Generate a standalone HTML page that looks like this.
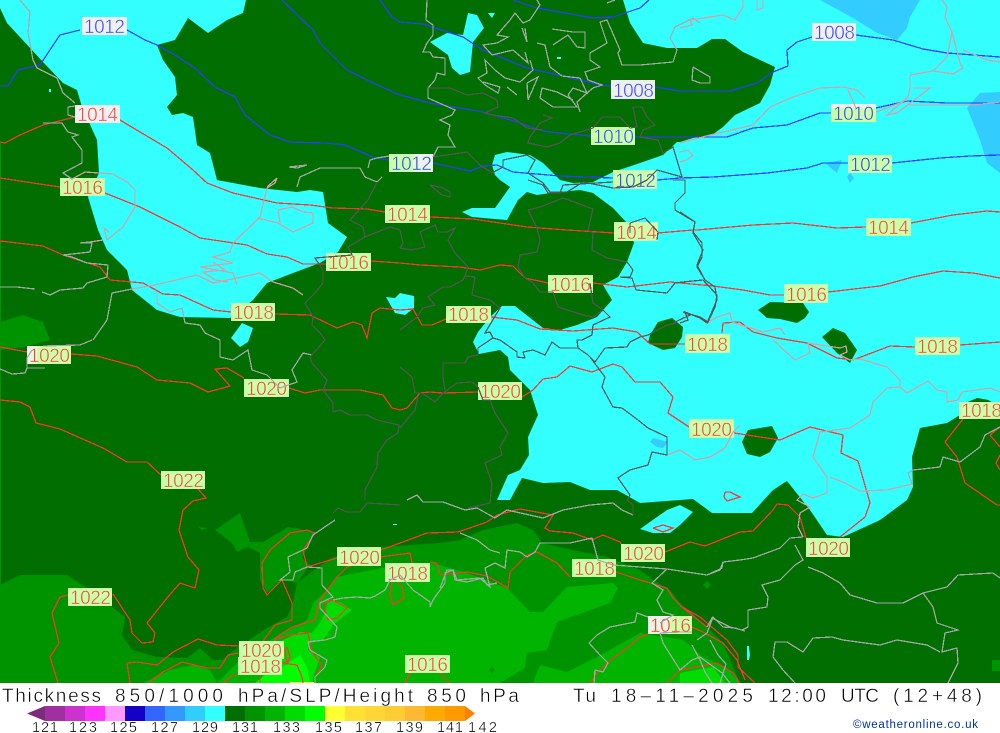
<!DOCTYPE html>
<html><head><meta charset="utf-8"><title>Thickness 850/1000 hPa/SLP/Height 850 hPa</title>
<style>
html,body{margin:0;padding:0;background:#fff;width:1000px;height:733px;overflow:hidden}
svg{display:block;position:absolute;left:0;top:0}
.r,.b,.g,.d,.p{fill:none;stroke-width:1.25;shape-rendering:crispEdges}
.r{stroke:#ff3333}.b{stroke:#2a3cff}.g{stroke:#a8a8a8}.d{stroke:#555}.p{stroke:#d2a0a8}
.l{font:19px "Liberation Sans",sans-serif;stroke-width:.55}
.t{font:19px "Liberation Sans",sans-serif;fill:#000;stroke:#fff;stroke-width:.45}
.n{font:14.5px "Liberation Sans",sans-serif;fill:#000;stroke:#fff;stroke-width:.3}
.gn{fill:#ccffaa;stroke:#ccffaa}.wh{fill:#f0f0f0;stroke:#f0f0f0}
</style></head><body>
<svg width="1000" height="733" viewBox="0 0 1000 733" xmlns="http://www.w3.org/2000/svg">
<rect width="1000" height="733" fill="#fff"/>
<rect width="1000" height="683" fill="#006e00"/>
<!-- band 2 -->
<g fill="#009300">
<path d="M0,585L20,575L67,575L90,590L125,617L122,635L132,650L157,657L187,658L200,648L213,660L222,660L237,648L267,628L287,617L293,603L297,583L310,573L333,557L380,547L440,543L460,540L483,530L517,523L533,530L542,543L573,550L607,557L640,570L653,580L670,590L680,603L703,623L723,643L733,667L740,683L0,683Z"/>
<path d="M215,530L240,513L250,542L263,542L288,527L315,532L302,558L310,565L297,583L283,580L267,593L260,580L260,553L248,547L237,552L232,543Z"/>
<path d="M0,322L23,315L43,322L50,340L25,347L0,350Z"/>
<rect x="0" y="143" width="1" height="450"/>
<path d="M198,527L208,528L202,530Z"/><path d="M707,581L711,585L707,589L703,585Z"/><rect x="992" y="660" width="8" height="11"/>
</g>
<!-- band 3 -->
<g fill="#00b400">
<path d="M217,683L240,660L262,645L283,633L307,620L313,603L327,590L337,577L387,567L433,563L467,573L507,588L530,612L543,612L567,587L613,583L618,588L610,603L557,622L547,650L527,653L525,668L500,683Z"/>
<path d="M533,683L540,665L567,672L597,657L640,633L683,640L703,657L727,668L740,683Z"/>
<path d="M143,683L170,670L193,665L210,670L217,683Z"/>
</g>
<path d="M492,667L495,670L492,673L489,670Z" fill="#009300"/>
<g fill="#00dc00">
<path d="M260,683L270,655L283,640L300,632L312,633L320,623L325,613L328,600L340,602L352,610L333,625L323,640L310,643L308,650L320,658L313,677L313,683Z"/>
<path d="M680,673L713,667L725,683L680,683Z"/>
</g>
<path d="M255,683L265,675L283,667L300,655L307,667L310,683Z" fill="#00ff00"/>
<rect x="290" y="682" width="24" height="1" fill="#ffff33"/>
<!-- cyan -->
<g fill="#33ffff">
<path d="M0,0L246,0L243,13L227,20L208,33L188,18L175,40L157,45L163,60L175,77L177,95L167,107L172,115L183,113L193,117L197,145L210,153L217,180L260,188L297,192L310,190L323,192L328,223L347,237L338,252L320,263L293,273L267,283L253,300L230,318L180,317L157,310L132,290L127,270L107,250L98,230L88,197L99,173L97,140L82,107L77,90L63,83L43,62L7,23L0,8Z"/>
<path d="M623,0L1000,0L1000,407L988,400L977,398L963,413L947,423L920,428L912,457L913,487L907,500L880,520L843,537L827,535L810,510L787,481L773,490L752,513L712,513L693,499L640,503L617,490L590,490L570,482L543,483L522,478L510,500L497,500L508,475L520,470L529,455L528,437L538,415L530,390L510,370L508,357L500,350L479,354L473,342L478,332L490,317L502,306L515,306L543,328L560,330L577,325L597,317L612,300L603,285L618,277L627,262L634,243L627,223L613,208L593,193L580,190L550,193L537,195L527,192L518,200L507,220L472,217L462,212L472,208L495,208L510,187L500,180L495,175L492,165L495,155L507,152L530,155L543,163L560,180L573,183L593,182L613,172L640,163L663,155L677,142L680,142L693,138L712,135L723,127L735,115L760,103L770,85L775,67L743,52L725,39L712,39L697,48L667,48L643,43L630,23Z"/>
<path d="M468,13L477,15L484,28L473,42L470,72L460,75L452,68L448,55L430,42L447,33L463,35Z"/>
<path d="M488,13L495,13L492,18Z"/><rect x="557" y="57" width="4" height="2"/><rect x="49" y="89" width="2" height="3"/>
<path d="M640,529L667,510L680,505L693,512L680,525L670,533L653,533Z"/>
<path d="M386,297L395,298L400,293L414,296L414,308L405,315L395,313Z"/>
<path d="M231,338L242,323L253,328L248,342L240,347Z"/>
</g>
<rect x="393" y="524" width="4" height="1" fill="#33ffff"/>
<path d="M747,646L749,646L750,655L749,660L747,660Z" fill="#33ffff"/>
<!-- blue -->
<g fill="#33ccff">
<path d="M820,0L920,0L910,17L907,28L897,40L877,33L853,18Z"/>
<path d="M1000,92L980,93L967,108L980,140L987,163L1000,173Z"/>
<path d="M825,163L842,160L837,173Z"/><path d="M847,177L850,173L854,178L850,183Z"/>
<path d="M650,442L653,438L668,442L663,448L657,447Z"/>
</g>
<!-- dark blobs -->
<g fill="#006e00">
<path d="M650,335L658,322L672,318L683,327L682,337L675,348L663,350L648,343Z"/>
<path d="M758,310L770,302L803,303L809,312L805,318L797,323L780,319L767,318Z"/>
<path d="M822,337L833,328L845,333L857,350L850,363L837,353Z"/>
<path d="M742,442L748,430L772,426L778,438L770,452L760,457L747,454Z"/>
<path d="M963,404L977,398L988,400L1000,407L1000,420L963,420Z"/>
</g>
<!-- blue contours -->
<g class="b">
<polyline points="0,86 8,86 18,70 40,65 50,50 60,35 80,30"/>
<polyline points="127,30 145,40 157,45 175,55 195,68 215,87 235,97 245,115 270,135 290,142 325,143 345,145 375,158 389,160"/>
<polyline points="433,163 447,166 470,171 483,166 497,165 513,172 560,176 613,178"/>
<polyline points="657,180 680,178 713,177 767,173 807,168 823,163 848,163"/>
<polyline points="892,163 940,158 970,156 1000,155"/>
<polyline points="282,0 313,30 320,43 347,70 363,78 380,86 397,94 430,103 483,112 517,122 543,131 567,134 591,136"/>
<polyline points="635,137 680,137 727,137 753,128 787,125 820,113 831,113"/>
<polyline points="876,108 907,101 947,103 1000,103"/>
<polyline points="380,0 392,17 400,22 423,24 463,37 483,50 527,68 567,77 600,85 611,86"/>
<polyline points="655,87 680,91 730,91 757,83 773,72 788,66 787,50 797,42 812,37"/>
<polyline points="856,35 893,40 923,49 947,53 1000,57"/>
<polyline points="513,0 537,8 593,18 613,17 640,8 649,0"/>
</g>
<!-- red contours -->
<g class="r">
<polyline points="0,142 5,143 20,135 43,125 75,117"/>
<polyline points="120,120 140,132 167,148 193,170 207,183 233,193 277,203 310,205 333,208 367,209 385,212"/>
<polyline points="430,217 473,219 527,227 567,230 614,233"/>
<polyline points="658,233 693,230 697,230 753,225 793,223 837,228 866,227"/>
<polyline points="911,223 953,215 987,211 1000,212"/>
<polyline points="0,178 33,183 60,187"/>
<polyline points="105,193 140,207 180,227 200,238 247,245 267,254 287,257 303,264 326,264"/>
<polyline points="371,261 400,263 420,265 460,267 480,270 500,265 513,266 525,278 548,283"/>
<polyline points="593,283 627,287 670,282 713,286 743,290 770,295 784,295"/>
<polyline points="828,292 880,286 913,277 943,271 973,273 1000,278"/>
<polyline points="0,241 43,246 63,255 100,267 110,280 143,283 163,294 180,295 213,310 231,312"/>
<polyline points="275,314 310,315 337,328 353,322 362,325 367,338 372,313 380,308 400,310 413,309 422,325 432,325 446,319"/>
<polyline points="491,317 517,320 540,329 573,331 613,328 637,332 650,344 685,344"/>
<polyline points="722,333 723,323 740,322 753,332 777,338 807,343 837,358 853,360 890,346 915,347"/>
<polyline points="960,345 1000,342"/>
<polyline points="0,347 27,352"/>
<polyline points="71,354 97,356 137,367 157,380 190,383 208,392 230,386 215,369 227,368 244,378"/>
<polyline points="289,388 305,393 320,390 360,390 383,395 392,408 400,410 407,408 420,393 430,392 443,393 478,392"/>
<polyline points="522,397 533,390 543,379 557,377 570,366 592,372 613,364 622,367 635,382 660,382 673,397 668,413 689,427"/>
<polyline points="734,433 780,440 810,427 843,435 841,453 858,461 870,503 865,517 840,537"/>
<polyline points="665,552 690,542 705,546 740,532 753,531 773,510 777,504 788,505 800,517 806,538"/>
<polyline points="621,544 620,542 603,535 592,540 573,533 550,531 545,528 553,515 520,509 497,515 487,522 458,532 427,533 400,543 381,550"/>
<polyline points="337,558 307,567 303,550 315,533 307,530 290,533 270,550 262,563 263,588 267,595 282,580 292,603 292,620 275,625 263,641"/>
<polyline points="239,646 217,645 198,639 173,652 157,665 137,662 127,663 130,683"/>
<polyline points="238,653 228,655 220,668 207,668 182,662 163,672 148,683"/>
<polyline points="260,675 260,683"/><polyline points="223,683 233,675 238,675"/>
<polyline points="287,647 290,657 287,663 285,650 287,647"/>
<polyline points="282,663 297,665 302,677 303,683"/>
<polyline points="274,640 290,635 308,633 312,652 322,665 315,678 315,683"/>
<polyline points="275,638 292,627 315,620 320,600 337,577 347,567 380,557 410,553 412,563"/>
<polyline points="430,562 437,563 440,575 467,572 487,576 508,588 510,572 527,555 537,552 557,563 570,577"/>
<polyline points="616,572 640,580 667,588 673,598 683,608 707,627"/>
<polyline points="680,606 700,617 727,640 738,655 738,667 755,683"/>
<polyline points="648,634 640,637 627,648 607,663 597,673 590,683"/>
<polyline points="692,627 703,632 723,643 737,660 745,680"/>
<polyline points="667,683 680,670 717,663 733,673 740,683"/>
<polyline points="392,582 390,595 393,605 404,598 402,587 397,582"/>
<polyline points="325,603 333,600 347,608 337,618 328,620 325,610 325,603"/>
<polyline points="405,683 410,673"/><polyline points="440,673 450,683"/>
<polyline points="0,400 20,402 30,407 36,423 60,429 103,448 127,462 147,462 161,475"/>
<polyline points="198,489 206,498 193,501 183,510 179,530 188,557 199,570 195,588 180,583 167,598 147,623 155,633 153,642 142,643 132,633 130,620 113,594"/>
<polyline points="68,595 60,597 52,613 59,643 50,657 58,683"/>
<polyline points="725,492 730,492 740,497 727,501 724,497 725,492"/>
<polyline points="653,528 663,525 673,528 663,532 653,528"/>
<polyline points="963,419 945,442 957,457 965,483 997,505 1000,505"/>
<polyline points="1000,427 990,435 1000,447"/><polyline points="1000,455 996,463 1000,470"/>
</g>
<!-- labels -->
<g>
<rect x="82" y="17" width="45" height="18" fill="#f0f0f0"/><rect x="75" y="105" width="45" height="18" fill="#f0f0f0"/>
<rect x="611" y="80" width="44" height="19" fill="#f0f0f0"/><rect x="812" y="23" width="44" height="18" fill="#f0f0f0"/>
<g fill="#ccffaa">
<rect x="60" y="178" width="45" height="18"/><rect x="231" y="303" width="44" height="18"/><rect x="326" y="253" width="45" height="18"/>
<rect x="385" y="205" width="45" height="18"/><rect x="389" y="154" width="44" height="18"/><rect x="591" y="127" width="44" height="18"/>
<rect x="613" y="170" width="44" height="19"/><rect x="614" y="222" width="44" height="19"/><rect x="548" y="275" width="45" height="18"/>
<rect x="446" y="306" width="45" height="17"/><rect x="478" y="382" width="44" height="18"/><rect x="685" y="334" width="45" height="19"/>
<rect x="689" y="419" width="45" height="19"/><rect x="831" y="104" width="45" height="18"/><rect x="848" y="155" width="44" height="18"/>
<rect x="866" y="218" width="45" height="18"/><rect x="784" y="284" width="44" height="19"/><rect x="915" y="337" width="45" height="18"/>
<rect x="959" y="402" width="41" height="17"/><rect x="806" y="538" width="44" height="19"/><rect x="27" y="346" width="44" height="18"/>
<rect x="244" y="379" width="45" height="18"/><rect x="161" y="471" width="44" height="18"/><rect x="68" y="588" width="44" height="18"/>
<rect x="337" y="547" width="44" height="19"/><rect x="385" y="563" width="45" height="19"/><rect x="239" y="641" width="45" height="18"/>
<rect x="238" y="657" width="44" height="18"/><rect x="405" y="655" width="45" height="18"/><rect x="621" y="544" width="44" height="18"/>
<rect x="572" y="559" width="44" height="18"/><rect x="648" y="616" width="44" height="18"/>
</g>
<rect x="413" y="154" width="20" height="18" fill="#f0f0f0"/><rect x="648" y="616" width="22" height="18" fill="#f0f0f0"/><rect x="831" y="104" width="45" height="4" fill="#f0f0f0"/><rect x="27" y="346" width="10" height="18" fill="#f0f0f0"/>
</g>
<g class="l" text-anchor="start">
<text class="l wh" style="fill:#2a3cff" x="84" y="33" textLength="41">1012</text>
<text class="l wh" style="fill:#ff3333" x="77" y="121" textLength="41">1014</text>
<text class="l gn" style="fill:#ff3333" x="62" y="194" textLength="41">1016</text>
<text class="l gn" style="fill:#ff3333" x="233" y="319" textLength="41">1018</text>
<text class="l gn" style="fill:#ff3333" x="328" y="269" textLength="41">1016</text>
<text class="l gn" style="fill:#ff3333" x="387" y="221" textLength="41">1014</text>
<text class="l gn" style="fill:#2a3cff" x="391" y="170" textLength="41">1012</text>
<text class="l wh" style="fill:#2a3cff" x="613" y="97" textLength="41">1008</text>
<text class="l gn" style="fill:#2a3cff" x="593" y="143" textLength="41">1010</text>
<text class="l gn" style="fill:#2a3cff" x="615" y="187" textLength="41">1012</text>
<text class="l gn" style="fill:#ff3333" x="616" y="239" textLength="41">1014</text>
<text class="l gn" style="fill:#ff3333" x="550" y="291" textLength="41">1016</text>
<text class="l gn" style="fill:#ff3333" x="448" y="321" textLength="41">1018</text>
<text class="l gn" style="fill:#ff3333" x="480" y="398" textLength="41">1020</text>
<text class="l gn" style="fill:#ff3333" x="687" y="351" textLength="41">1018</text>
<text class="l gn" style="fill:#ff3333" x="691" y="436" textLength="41">1020</text>
<text class="l wh" style="fill:#2a3cff" x="814" y="39" textLength="41">1008</text>
<text class="l gn" style="fill:#2a3cff" x="833" y="120" textLength="41">1010</text>
<text class="l gn" style="fill:#2a3cff" x="850" y="171" textLength="41">1012</text>
<text class="l gn" style="fill:#ff3333" x="868" y="234" textLength="41">1014</text>
<text class="l gn" style="fill:#ff3333" x="786" y="301" textLength="41">1016</text>
<text class="l gn" style="fill:#ff3333" x="917" y="353" textLength="41">1018</text>
<text class="l gn" style="fill:#ff3333" x="961" y="417" textLength="41">1018</text>
<text class="l gn" style="fill:#ff3333" x="808" y="555" textLength="41">1020</text>
<text class="l gn" style="fill:#ff3333" x="29" y="362" textLength="41">1020</text>
<text class="l gn" style="fill:#ff3333" x="246" y="395" textLength="41">1020</text>
<text class="l gn" style="fill:#ff3333" x="163" y="487" textLength="41">1022</text>
<text class="l gn" style="fill:#ff3333" x="70" y="604" textLength="41">1022</text>
<text class="l gn" style="fill:#ff3333" x="339" y="564" textLength="41">1020</text>
<text class="l gn" style="fill:#ff3333" x="387" y="580" textLength="41">1018</text>
<text class="l gn" style="fill:#ff3333" x="241" y="657" textLength="41">1020</text>
<text class="l gn" style="fill:#ff3333" x="240" y="673" textLength="41">1018</text>
<text class="l gn" style="fill:#ff3333" x="407" y="671" textLength="41">1016</text>
<text class="l gn" style="fill:#ff3333" x="623" y="560" textLength="41">1020</text>
<text class="l gn" style="fill:#ff3333" x="574" y="575" textLength="41">1018</text>
<text class="l gn" style="fill:#ff3333" x="650" y="632" textLength="41">1016</text>
</g>
<!-- coasts -->
<g class="g">
<polyline points="20,0 30,12 28,33 33,60 37,68 57,78 63,93 75,103"/>
<polyline points="75,106 68,107 68,115 75,117"/>
<polyline points="43,123 62,123 68,132 78,135 72,137 82,150 82,163 63,173 72,179"/>
<polyline points="90,242 80,243 92,243 90,252 63,255 72,257 87,263 108,265 107,277 87,283 83,288 60,290 50,295 42,292"/>
<polyline points="0,287 17,287 35,289"/>
<polyline points="93,340 107,320 112,293 132,289"/>
<polyline points="170,312 182,308 185,323 200,325 205,333 220,340 220,357 233,360 248,350 252,370 267,375 280,388 297,382 292,370 303,353 312,355"/>
<polyline points="92,340 80,345 43,346"/><polyline points="0,369 12,374 25,373 27,368 45,368"/><polyline points="27,368 27,358 32,350"/>
<polyline points="289,167 307,165 297,168 289,167"/>
<polyline points="297,187 300,177 320,168 360,168 365,177 377,182 382,177"/>
<polyline points="368,168 370,160 377,158 389,156"/>
<polyline points="335,520 313,535 307,548 288,557 290,572 280,580 293,580 295,572 307,567 322,568 322,585 333,597 320,603 320,608 337,627 335,637 325,640 308,642 310,650 327,660 325,667 315,677 315,683"/>
<polyline points="333,600 343,598 357,597 370,598 375,596 385,590 390,580 400,575 413,590 423,597 430,602 430,607 433,600 445,583 445,573 453,570 455,580 467,582 483,578 487,585 497,583"/>
<polyline points="440,588 447,570 453,570 457,580 480,578 490,587 485,568 495,563 505,568 507,550 520,552 527,557 535,552 540,543 570,543 592,538 598,560 613,565 667,569 687,572 707,575 722,568 723,562 740,560 753,558 780,548 790,538 803,537"/>
<polyline points="460,533 477,540 490,550 500,553"/>
<polyline points="667,569 652,583 663,590 657,600 663,612 673,615 660,623"/>
<polyline points="648,617 637,613 635,622 610,627 597,635 589,643 600,655 608,663 603,672 595,670 594,683"/>
<polyline points="660,633 663,643 680,670 692,660 700,657 722,673 730,683"/>
<polyline points="697,640 707,633 713,617 723,627 735,628 745,631"/>
<polyline points="692,645 700,660 705,672 712,683"/><polyline points="710,640 718,655 726,664 720,683"/>
<polyline points="692,632 680,632 660,633"/>
<polyline points="707,627 712,618 730,627 742,630 748,627 748,610 767,607 768,597 762,585 780,580 795,565 803,560 795,545"/>
<polyline points="808,567 823,573 840,583 850,595 877,603 903,603 923,593 947,587 958,575 993,573 1000,578"/>
<polyline points="923,593 933,607 937,623 958,630 945,633 942,652 957,648 958,663 948,683"/>
<polyline points="940,652 927,645 897,640 880,645 843,640 832,637 813,638 803,652 787,642 775,642 773,657 783,670 795,683"/>
<polyline points="680,571 707,575 720,570 723,562"/>
<polyline points="912,484 908,473 913,470 940,467 943,457 960,462 980,447 985,435 1000,427"/>
<polyline points="427,0 426,20 433,25 433,35 427,43 423,52 430,52 433,57 445,58 445,75 437,73 435,80 428,88 428,98 455,110 452,115 440,120 450,125 448,135 455,147 438,147 433,157"/>
<polyline points="537,0 540,5 530,20 523,23 515,13 510,20 497,35 508,37 497,43 483,45 492,55 513,50 528,63 525,52"/>
<polyline points="530,60 533,70 520,82 505,78 495,70 485,60 487,73 478,78 485,85 498,93 500,87 483,82"/>
<polyline points="537,43 545,45 550,67 562,76 580,78 587,93 573,88 568,95 577,107 553,107 540,98 542,88 557,92 573,100"/>
<polyline points="552,29 573,32 585,32 585,48 577,47 568,35 553,45"/>
<polyline points="580,112 577,102 587,93 593,88 602,85 588,80 585,72 600,67 590,60 590,53 607,43 600,22 607,20 620,50 618,53 622,65 640,65 673,62 677,50 670,38 675,27 693,18 700,23"/>
<polyline points="607,3 615,0"/><polyline points="522,28 527,42 525,28"/><polyline points="527,83 538,77 528,100 527,83"/><polyline points="507,87 517,95"/>
<polyline points="693,67 710,77 710,83 700,83 692,80 693,67"/>
<polyline points="407,500 417,495 423,502 443,502 465,510 477,508 495,518 507,510 543,518 563,510 590,505 613,503 622,510 633,515"/>
</g>
<g class="p">
<polyline points="72,179 85,172 113,174 127,182 135,190 135,207 123,227 107,240 104,228 109,232"/>
<polyline points="103,240 90,242"/>
<polyline points="132,289 155,285 197,275 213,283 237,278 260,273 273,282 293,288 303,295"/>
<polyline points="157,293 157,303 170,312"/>
<polyline points="267,187 277,178 275,183 267,188 260,217 233,243 230,252 213,257 233,263 200,267 233,273 237,285"/>
<polyline points="257,218 278,223 293,232 313,223 313,213 303,212 292,207 278,210 280,223"/>
<polyline points="213,262 225,270 203,272 215,280 228,282"/>
<polyline points="680,28 692,25 690,20 723,15 735,20 743,7 743,0"/><polyline points="757,0 757,10 763,8 763,0"/>
<polyline points="942,0 947,7 945,17 952,32 960,63 963,68 953,74 933,71 910,75 910,88 908,97 887,115 897,113 930,88 913,88"/>
<polyline points="952,32 947,57 933,71"/><polyline points="963,50 987,60 1000,62"/>
<polyline points="680,143 710,135 753,125 770,107 793,97 820,88 843,87 857,90 865,98"/><polyline points="848,90 856,108"/>
<polyline points="876,112 907,100"/><polyline points="907,105 973,105 1000,102"/>
<polyline points="680,152 688,150 693,155 687,160 680,162"/>
<polyline points="707,323 717,317 730,313 732,322 763,332 780,328 785,335"/>
<polyline points="773,340 795,360 810,353 808,343 840,348 846,346 847,352 840,355 850,360 860,359 887,367 900,380 900,387 907,393 928,381 937,390 947,392 947,402 958,400 962,392 990,388 1000,392"/>
<polyline points="900,387 887,388 873,402 870,415 850,428 820,432 813,457 827,477 827,493 813,498 803,494 797,500 810,507 800,513 798,527 803,537"/>
<polyline points="830,477 843,482 860,491 887,490 912,484"/>
<polyline points="667,455 680,450 695,460 710,457 725,448 733,432 740,425"/>
</g>
<g class="d">
<polyline points="428,88 450,88 467,95 483,93 497,100 498,107 485,113 493,115 513,118 527,128 543,130"/>
<polyline points="543,115 552,118 540,123 530,137 528,143 547,147 560,143 570,135 593,128 602,117 620,117 630,128 637,127 633,107 642,107 647,117 655,125 643,130 640,137 658,140 663,153 673,147 682,177"/>
<polyline points="433,157 467,152 480,165 492,173 503,167 503,160 527,155 535,160 528,173 543,183 550,192 567,192 583,182 613,188 633,187 647,180 657,170 682,177"/>
<polyline points="673,180 685,180 685,193 675,203 675,210 695,222 693,232 702,243 702,257 697,267 705,280"/>
<polyline points="528,180 543,185 548,193 560,193 563,185 613,182"/>
<polyline points="528,210 540,207 563,198 577,203 593,209 588,230 593,233 592,250 607,258 627,262 633,270 630,277 620,277 632,278 636,290 667,293 675,283 683,282 703,280 717,295 715,307 708,322 700,317 683,312 690,315 673,323"/>
<polyline points="528,210 537,228 540,240 537,252 520,255 518,267 525,278 533,283 540,292 553,292 558,307 583,315 593,317 603,310 593,303 590,283"/>
<polyline points="603,310 610,317 593,325 592,335 582,340 577,340 578,348 588,355 595,362 605,348 627,347 630,342 640,337 648,335 667,325 677,323"/>
<polyline points="578,348 560,348 552,342 545,355 533,350 523,352 525,358 517,357 517,352 500,340 493,338 478,348 478,355 468,357 465,363 443,363 443,377 445,390"/>
<polyline points="493,338 490,332 485,333 500,308 490,300 472,295 475,277 465,276 463,280 450,287 443,287 428,297 435,305 423,308 417,317 400,330"/>
<polyline points="465,276 468,267 455,253 448,240 455,228 447,232 438,232 435,225 420,232 425,247 412,250 400,248"/>
<polyline points="400,230 403,243 400,248"/><polyline points="430,185 443,188 450,192 450,197 442,195 430,185"/>
<polyline points="478,387 483,400 490,400 495,413 508,433 500,447 502,455 485,463 492,483 490,503 468,508"/>
<polyline points="478,387 472,382 457,383 443,393 435,402 422,393 415,393 412,377 400,367"/>
<polyline points="418,397 415,410 400,428"/>
<polyline points="630,223 645,218 658,232 657,240"/><polyline points="630,223 630,233"/>
<polyline points="590,357 605,377 602,387 613,407 622,408 638,420 648,428 667,437 667,455 652,452 648,465 630,470 618,478 630,495 627,500 633,505 633,515"/>
<polyline points="333,513 338,508 347,512 360,512 367,503 400,505"/>
<polyline points="365,500 365,490 377,467 378,453 387,440 398,433 399,425 377,420 367,415 350,415 340,410 333,412 333,403 323,390 327,380 312,363 310,357 325,340"/>
<polyline points="680,212 695,222 693,233 703,250 697,265 705,280 715,287 717,300 707,323 700,318 685,312 688,320 680,323"/>
<polyline points="368,200 350,220 363,227 365,237 348,247 352,255 327,257 315,258 323,270 323,283 315,293 305,303 313,317 312,325 320,333 325,340"/>
<polyline points="377,182 368,200"/><polyline points="365,237 390,227 400,230"/>
</g>
<rect x="0" y="683" width="1000" height="50" fill="#fff"/>
<!-- title -->
<text class="t" x="2" y="702" textLength="99">Thickness</text>
<text class="t" x="115" y="702" textLength="108">850/1000</text>
<text class="t" x="238" y="702" textLength="175">hPa/SLP/Height</text>
<text class="t" x="427" y="702" textLength="39">850</text>
<text class="t" x="480" y="702" textLength="39">hPa</text>
<text class="t" x="573" y="702" textLength="23">Tu</text>
<text class="t" x="611" y="702" textLength="142">18–11–2025</text>
<text class="t" x="768" y="702" textLength="58">12:00</text>
<text class="t" x="841" y="702" textLength="38">UTC</text>
<text class="t" x="893" y="702" textLength="89">(12+48)</text>
<!-- legend -->
<path d="M45,706L45,721L27,713.500Z" fill="#7b2d7b"/>
<path d="M465,706L465,721L475,713.500Z" fill="#ff8000"/>
<g shape-rendering="crispEdges">
<rect x="45" y="706" width="20" height="15" fill="#a030a0"/><rect x="65" y="706" width="20" height="15" fill="#cc33cc"/>
<rect x="85" y="706" width="20" height="15" fill="#ff33ff"/><rect x="105" y="706" width="20" height="15" fill="#ff99ff"/>
<rect x="125" y="706" width="20" height="15" fill="#1400c8"/><rect x="145" y="706" width="20" height="15" fill="#3366ff"/>
<rect x="165" y="706" width="20" height="15" fill="#3399ff"/><rect x="185" y="706" width="20" height="15" fill="#33ccff"/>
<rect x="205" y="706" width="20" height="15" fill="#33ffff"/><rect x="225" y="706" width="20" height="15" fill="#006e00"/>
<rect x="245" y="706" width="20" height="15" fill="#009300"/><rect x="265" y="706" width="20" height="15" fill="#00b400"/>
<rect x="285" y="706" width="20" height="15" fill="#00dc00"/><rect x="305" y="706" width="20" height="15" fill="#00ff00"/>
<rect x="325" y="706" width="20" height="15" fill="#ffff33"/><rect x="345" y="706" width="20" height="15" fill="#ffe033"/>
<rect x="365" y="706" width="20" height="15" fill="#ffd633"/><rect x="385" y="706" width="20" height="15" fill="#ffcc33"/>
<rect x="405" y="706" width="20" height="15" fill="#ffb833"/><rect x="425" y="706" width="20" height="15" fill="#ffaa00"/>
<rect x="445" y="706" width="20" height="15" fill="#ff9900"/>
</g>
<text class="n" x="32" y="732" textLength="26">121</text><text class="n" x="69" y="732" textLength="28">123</text>
<text class="n" x="110" y="732" textLength="27">125</text><text class="n" x="151" y="732" textLength="27">127</text>
<text class="n" x="192" y="732" textLength="26">129</text><text class="n" x="232" y="732" textLength="26">131</text>
<text class="n" x="273" y="732" textLength="27">133</text><text class="n" x="315" y="732" textLength="27">135</text>
<text class="n" x="355" y="732" textLength="27">137</text><text class="n" x="396" y="732" textLength="27">139</text>
<text class="n" x="437" y="732" textLength="26">141</text><text class="n" x="468" y="732" textLength="29">142</text>
<text x="853" y="728" textLength="125" style="font:11.500px 'Liberation Sans',sans-serif;fill:#003399">©weatheronline.co.uk</text>
</svg>
</body></html>
